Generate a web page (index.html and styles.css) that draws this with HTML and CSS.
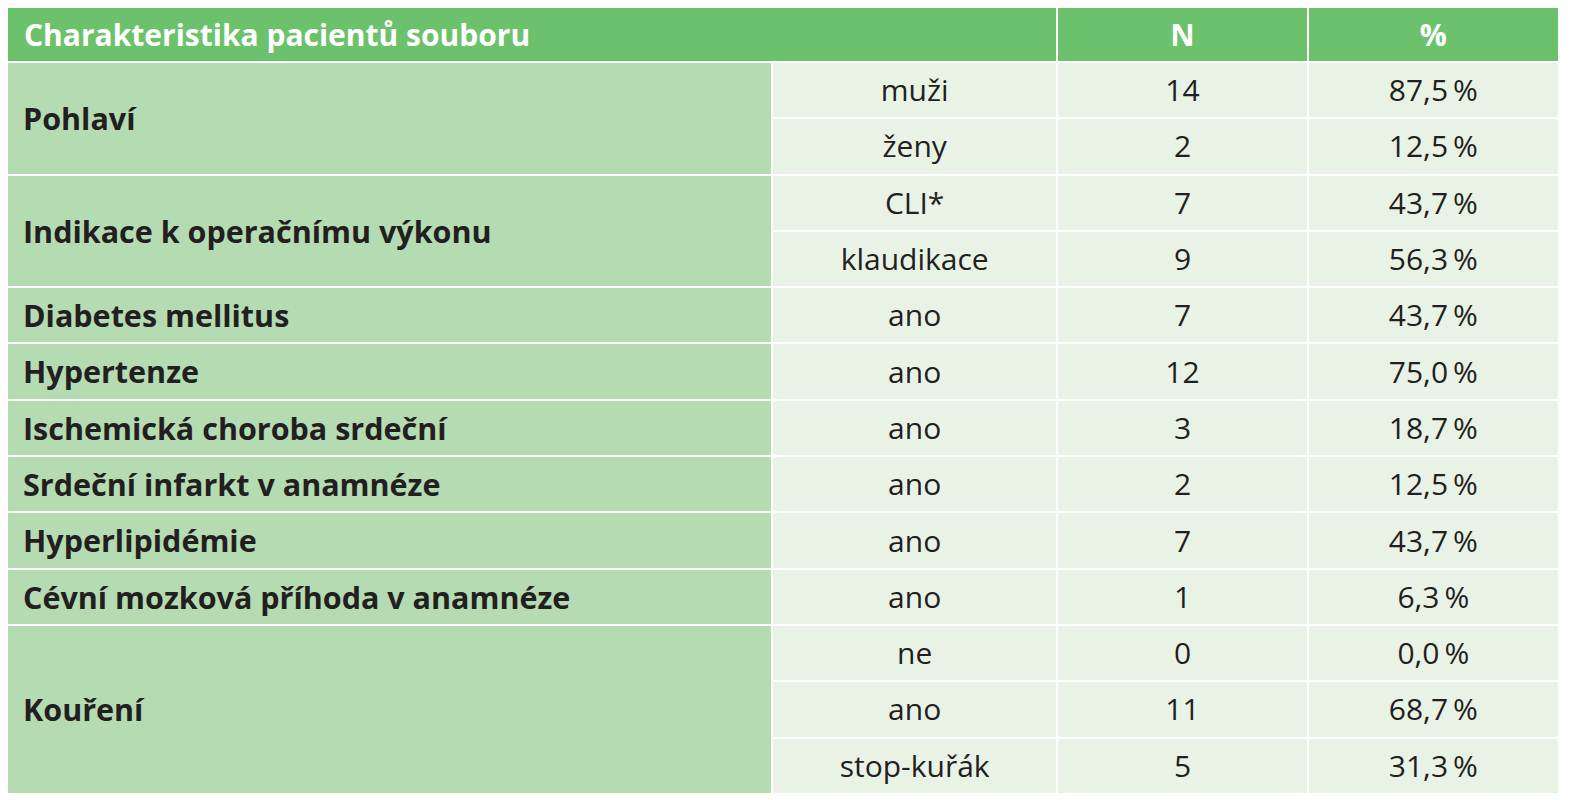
FILE: index.html
```html
<!DOCTYPE html>
<html lang="cs">
<head>
<meta charset="utf-8">
<title>Charakteristika pacientů souboru</title>
<link rel="stylesheet" href="styles.css">
</head>
<body>
<table class="tbl">
  <colgroup>
    <col class="c-label">
    <col class="c-value">
    <col class="c-n">
    <col class="c-pct">
  </colgroup>
  <thead>
    <tr>
      <th class="h-title" colspan="2">Charakteristika pacientů souboru</th>
      <th class="h-num">N</th>
      <th class="h-num">%</th>
    </tr>
  </thead>
  <tbody>
    <tr><td class="label" rowspan="2">Pohlaví</td><td class="val">muži</td><td class="val">14</td><td class="val">87,5&#8201;%</td></tr>
    <tr><td class="val">ženy</td><td class="val">2</td><td class="val">12,5&#8201;%</td></tr>
    <tr><td class="label" rowspan="2">Indikace k operačnímu výkonu</td><td class="val">CLI*</td><td class="val">7</td><td class="val">43,7&#8201;%</td></tr>
    <tr><td class="val">klaudikace</td><td class="val">9</td><td class="val">56,3&#8201;%</td></tr>
    <tr><td class="label">Diabetes mellitus</td><td class="val">ano</td><td class="val">7</td><td class="val">43,7&#8201;%</td></tr>
    <tr><td class="label">Hypertenze</td><td class="val">ano</td><td class="val">12</td><td class="val">75,0&#8201;%</td></tr>
    <tr><td class="label">Ischemická choroba srdeční</td><td class="val">ano</td><td class="val">3</td><td class="val">18,7&#8201;%</td></tr>
    <tr><td class="label">Srdeční infarkt v anamnéze</td><td class="val">ano</td><td class="val">2</td><td class="val">12,5&#8201;%</td></tr>
    <tr><td class="label">Hyperlipidémie</td><td class="val">ano</td><td class="val">7</td><td class="val">43,7&#8201;%</td></tr>
    <tr><td class="label">Cévní mozková příhoda v anamnéze</td><td class="val">ano</td><td class="val">1</td><td class="val">6,3&#8201;%</td></tr>
    <tr><td class="label" rowspan="3">Kouření</td><td class="val">ne</td><td class="val">0</td><td class="val">0,0&#8201;%</td></tr>
    <tr><td class="val">ano</td><td class="val">11</td><td class="val">68,7&#8201;%</td></tr>
    <tr><td class="val">stop-kuřák</td><td class="val">5</td><td class="val">31,3&#8201;%</td></tr>
  </tbody>
</table>
</body>
</html>
```

FILE: styles.css
```css
html, body {
  background: #ffffff;
}
body {
  margin: 8px;
  font-family: "Open Sans", "Liberation Sans", sans-serif;
  color: #231f20;
}
.tbl {
  margin: -2px;
  border-collapse: separate;
  border-spacing: 2px;
  table-layout: fixed;
  width: 1554px;
}
.c-label { width: 762px; }
.c-value { width: 283px; }
.c-n { width: 248px; }
.c-pct { width: 249px; }

th {
  background: #6cc26c;
  color: #ffffff;
  font-weight: 700;
  font-size: 30px;
  height: 53px;
  padding: 0;
  vertical-align: middle;
}
.h-title {
  text-align: left;
  padding-left: 16px;
}
.h-num {
  text-align: center;
}
td {
  height: 54.3px;
  padding: 0;
  vertical-align: middle;
  font-size: 30px;
  line-height: 1;
}
.label {
  background: #b4dbb1;
  font-weight: 700;
  font-size: 30.5px;
  text-align: left;
  padding-left: 15px;
}
.val {
  background: #e8f3e6;
  font-weight: 400;
  text-align: center;
}
```
